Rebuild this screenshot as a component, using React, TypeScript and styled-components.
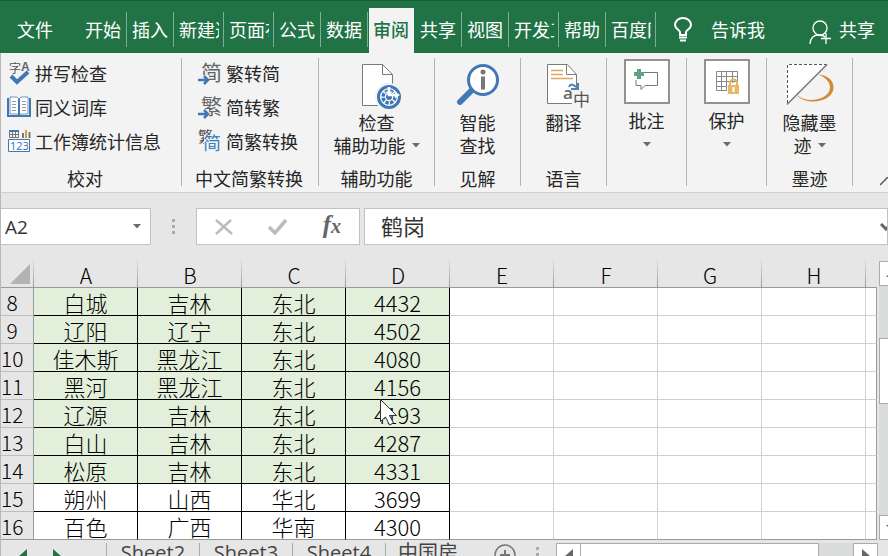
import React from 'react';
import styled, { createGlobalStyle } from 'styled-components';

const GlobalStyle = createGlobalStyle`
  * { box-sizing: border-box; }
  body {
    margin: 0;
    overflow: hidden;
    background: #e6e6e6;
    color: #262626;
    font-family: "Noto Sans CJK SC", sans-serif;
    font-size: 18px;
  }
  button, input {
    margin: 0;
    padding: 0;
    border: 0;
    background: none;
    color: inherit;
    font: inherit;
    border-radius: 0;
  }
  svg { display: block; flex: none; }
`;

const Shell = styled.div`
  position: relative;
  display: flex;
  flex-direction: column;
  height: 100vh;
  overflow: hidden;
`;

/* ---------- tab strip ---------- */
const TabStrip = styled.nav`
  display: flex;
  flex: none;
  height: 53px;
  padding-top: 7px;
  background: #217346;
  border-top: 1px solid #1a5c38;
  color: #fff;
`;

const FileTab = styled.button`
  width: 80px;
  padding: 0 10px 3px 0;
`;

const Tab = styled.button<{ $active?: boolean; $wide?: boolean }>`
  flex: none;
  width: ${p => (p.$wide ? 50 : 47)}px;
  padding: 0 5px 3px;
  line-height: 42px;
  text-align: left;
  white-space: nowrap;
  background: ${p => (p.$active
    ? 'linear-gradient(#f3f3f3, #f3f3f3) 1px 0 / 45px 100% no-repeat'
    : 'linear-gradient(#7fae94, #7fae94) right 4px / 1px 35px no-repeat')};
  color: ${p => (p.$active ? '#217346' : '#fff')};
  font-weight: ${p => (p.$active ? 500 : 400)};
`;

const Clip = styled.span`
  display: block;
  overflow: hidden;
`;

const TellMe = styled.button`
  display: flex;
  align-items: center;
  gap: 19px;
  margin-left: 18px;
  padding-bottom: 3px;
`;

const Share = styled.button`
  display: flex;
  align-items: center;
  gap: 7px;
  margin-left: auto;
  margin-right: 13px;
  padding-bottom: 3px;
`;

/* ---------- ribbon ---------- */
const Ribbon = styled.section`
  display: flex;
  flex: none;
  height: 140px;
  padding: 5px 0 6px;
  background: #f3f3f3;
  border-left: 1px solid #b8b8b8;
  border-bottom: 1px solid #cfcfcf;
`;

const Group = styled.div<{ $w: number; $pad?: number }>`
  display: flex;
  flex: none;
  flex-direction: column;
  align-items: ${p => (p.$pad ? 'stretch' : 'center')};
  width: ${p => p.$w}px;
  padding-left: ${p => p.$pad || 0}px;
  border-right: 1px solid #b3b3b3;
`;

const GroupName = styled.div<{ $shift?: number }>`
  margin-top: auto;
  margin-left: ${p => p.$shift || 0}px;
  line-height: 16px;
  white-space: nowrap;
`;

const Command = styled.button`
  display: flex;
  align-items: center;
  gap: 4px;
  height: 34px;
  padding-bottom: 4px;
  white-space: nowrap;
`;

const BigCommand = styled.button`
  display: flex;
  flex-direction: column;
  align-items: center;
  line-height: 23px;
`;

const BigIcon = styled.span`
  display: flex;
  justify-content: center;
  height: 53px;
  padding-top: 4px;
`;

const BoxIcon = styled.span`
  display: flex;
  align-items: center;
  justify-content: center;
  width: 46px;
  height: 45px;
  margin: 1px 0 5px;
  background: #fff;
  border: 2px solid #959191;
`;

const Line = styled.span`
  display: flex;
  align-items: center;
  gap: 6px;
  white-space: nowrap;
`;

const Below = styled.span`
  padding-top: 10px;
`;

const Collapse = styled.button`
  display: flex;
  flex: 1;
  align-items: flex-end;
  justify-content: flex-end;
  overflow: hidden;
`;

/* ---------- formula bar ---------- */
const FormulaBar = styled.section`
  display: flex;
  flex: none;
  height: 64px;
  padding: 15px 0 12px;
  border-left: 1px solid #b8b8b8;
`;

const Field = styled.div<{ $w?: number }>`
  display: flex;
  align-items: center;
  flex: ${p => (p.$w ? 'none' : '1')};
  width: ${p => (p.$w ? `${p.$w}px` : 'auto')};
  background: #fff;
  border: 1px solid #c2c2c2;
`;

const NameField = styled(Field)`
  border-left: 0;
  padding: 0 9px 0 4px;
`;

const NameInput = styled.input`
  flex: 1;
  min-width: 0;
  color: #333;
  font: 19px "Open Sans", sans-serif;
`;

const FormulaInput = styled.input`
  flex: 1;
  min-width: 0;
  height: 35px;
  padding: 0 0 4px 16px;
  color: #333;
  font-size: 22px;
`;

const Grip = styled.span`
  display: flex;
  align-items: center;
  justify-content: center;
  width: 45px;
`;

const Tools = styled(Field)`
  justify-content: space-between;
  margin-right: 4px;
  padding: 0 18px;
`;

const Fx = styled.button`
  padding-bottom: 2px;
  color: #666;
  font: italic bold 25px/30px "Liberation Serif", serif;

  small { font-size: 20px; }
`;

/* ---------- sheet ---------- */
const SheetArea = styled.section`
  display: flex;
  flex: none;
  gap: 2px;
`;

const GridFrame = styled.div`
  flex: 1;
  min-width: 0;
  overflow: hidden;
  border-left: 1px solid #b8b8b8;
`;

const Grid = styled.table`
  width: 100%;
  table-layout: fixed;
  border-spacing: 0;
  color: #000;
  font-size: 22px;
  font-weight: 300;
  text-align: center;
`;

const ColHead = styled.th<{ $edge?: boolean }>`
  height: 31px;
  padding: 6px 0 0;
  border-bottom: 1px solid #999;
  background: ${p => (p.$edge
    ? 'none'
    : 'linear-gradient(#e6e6e6, #999) right bottom / 1px 30px no-repeat')};
  font-size: 21px;
  font-weight: 300;
  line-height: 24px;
`;

const Corner = styled(ColHead)`
  padding: 0 3px 3px 9px;
  vertical-align: bottom;
`;

const RowHead = styled.th`
  height: 28px;
  padding: 2px 10px 0 0;
  border-right: 1px solid #999;
  border-bottom: 1px solid #bdbdbd;
  font-size: 21px;
  font-weight: 300;
  line-height: 25px;

  tr:last-child > & { border-bottom-color: #999; }
`;

const Cell = styled.td<{ $data?: boolean; $green?: boolean; $edge?: boolean }>`
  height: 28px;
  padding: 2px 0 0;
  white-space: nowrap;
  line-height: 25px;
  background: ${p => (p.$green ? '#e2efda' : '#fff')};
  border-right: 1px solid ${p => (p.$data ? '#000' : p.$edge ? '#999' : '#d0d0d0')};
  border-bottom: 1px solid ${p => (p.$data ? '#000' : '#d0d0d0')};

  tr:last-child > & { border-bottom-color: #999; }
`;

const VScroll = styled.div`
  display: flex;
  flex-direction: column;
  align-items: flex-start;
  width: 9px;
  margin-top: 4px;
  overflow: hidden;
  background: #dadcdb;
`;

const ScrollButton = styled.button`
  display: flex;
  flex: none;
  align-items: center;
  justify-content: center;
  width: 25px;
  height: 25px;
  background: #fff;
  border: 1px solid #ababab;
`;

const VThumb = styled.div`
  flex: none;
  width: 25px;
  height: 66px;
  margin: 52px 0 auto;
  background: #fff;
  border: 1px solid #ababab;
`;

/* ---------- sheet tabs ---------- */
const Footer = styled.footer`
  display: flex;
  flex: none;
  height: 30px;
  border-left: 1px solid #b8b8b8;
  color: #444;
`;

const SheetNav = styled.div`
  display: flex;
  gap: 26px;
  width: 106px;
  padding: 6px 0 0 17px;
  border-right: 1px solid #ababab;
  margin-top: 3px;
`;

const SheetTab = styled.button<{ $last?: boolean }>`
  width: ${p => (p.$last ? 85 : 93)}px;
  margin-top: 3px;
  padding-bottom: 8px;
  padding-left: ${p => (p.$last ? 12 : 0)}px;
  border-right: ${p => (p.$last ? 0 : 1)}px solid #ababab;
  font: 20px/16px "Open Sans", "Noto Sans CJK SC", sans-serif;
  text-align: ${p => (p.$last ? 'left' : 'center')};
  white-space: nowrap;
`;

const AddSheet = styled.button`
  width: 60px;
  padding: 0 0 0 23px;
`;

const FootGrip = styled.span`
  flex: 1;
  padding: 7px 0 0 5px;
`;

const HScroll = styled.div`
  display: flex;
  width: 322px;
  height: 25px;
  margin: 3px 10px 0 0;
  background: #dadcdb;
`;

const HThumb = styled.div`
  flex: none;
  width: 238px;
  margin-right: auto;
  background: #fff;
  border: 1px solid #ababab;
  border-left: 0;
`;

const Pointer = styled.svg`
  position: absolute;
  left: 379px;
  top: 398px;
`;

/* ---------- icons ---------- */
const cjk = '"Noto Sans CJK SC", sans-serif';

const Caret = () => (
  <svg width="8" height="5" viewBox="0 0 8 5"><path d="M0 0h8L4 4.5z" fill="#6b6b6b" /></svg>
);

const SpellIcon = () => (
  <svg width="24" height="26" viewBox="0 0 24 26">
    <text x="2" y="13" fontSize="12" fontFamily={cjk} fill="#555">字</text>
    <text x="14" y="11" fontSize="12" fontFamily="Liberation Sans, sans-serif" fontWeight="bold" fill="#666">A</text>
    <path d="M4 16l6 6L21 12" fill="none" stroke="#3f78b5" strokeWidth="4" />
  </svg>
);

const BookIcon = () => (
  <svg width="24" height="22" viewBox="0 0 24 22">
    <path d="M1 2v18h22V2" fill="#fff" stroke="#3f78b5" strokeWidth="2" />
    <path d="M3 1h7l2 2 2-2h7v17h-7l-2 1-2-1H3z" fill="#fff" stroke="#7493b5" />
    <path d="M12 3v16" stroke="#3f78b5" strokeWidth="2" />
    <path d="M5 5.500h4M5 8.500h4M5 11.500h4M5 14.500h4M15 5.500h4M15 8.500h4M15 11.500h4M15 14.500h4" stroke="#999" />
  </svg>
);

const StatsIcon = () => (
  <svg width="24" height="24" viewBox="0 0 24 24">
    <path d="M2.500 2.500h9v6h-9zM2 5.500h10M5.500 2v7M8.500 2v7" fill="none" stroke="#777" />
    <path d="M2 2h10" stroke="#3f78b5" strokeWidth="2" />
    <path d="M16 9V4" stroke="#777" strokeWidth="2" />
    <path d="M19 9V1" stroke="#e0993f" strokeWidth="2" />
    <path d="M22.500 9V3" stroke="#777" strokeWidth="2" />
    <path d="M1.500 10.500h21v12h-21z" fill="#fff" stroke="#3f78b5" />
    <text x="3" y="21" fontSize="11" fontFamily="Open Sans, sans-serif" fill="#3470aa">123</text>
  </svg>
);

const ConvertIcon = ({ char, both }: { char: string; both?: boolean }) => (
  <svg width="24" height="26" viewBox="0 0 24 26">
    {both && <text x="0" y="14" fontSize="15" fontFamily={cjk} fill="#555">繁</text>}
    {both && <path d="M6 7h18v19H6z" fill="#f3f3f3" />}
    <text x={both ? 5 : 3} y={both ? 22 : 20} fontSize={both ? 18 : 21} fontFamily={cjk} fill={both ? '#3b7fc0' : '#666'}>{char}</text>
    {!both && <path d="M0 15h11v8H0z" fill="#f3f3f3" />}
    {!both && <path d="M0 20h9M6 16l4 4-4 4" fill="none" stroke="#3f78b5" strokeWidth="2.500" />}
  </svg>
);

const AccessIcon = () => (
  <svg width="48" height="48" viewBox="-6 0 48 48">
    <path d="M3.500 2.500h20l10 10v31h-30z" fill="#fff" stroke="#7a7a7a" />
    <path d="M23.500 2.500v10h10" fill="none" stroke="#7a7a7a" />
    <circle cx="30" cy="35" r="14" fill="#f3f3f3" />
    <circle cx="30" cy="35" r="10.500" fill="#fff" stroke="#3f78b5" strokeWidth="3" />
    <circle cx="30" cy="35" r="6" fill="none" stroke="#3f78b5" strokeWidth="3.500" strokeDasharray="3.500 1.200" />
    <circle cx="30" cy="35" r="3" fill="#3f78b5" />
    <path d="M30 25v8h8" fill="none" stroke="#fff" strokeWidth="2.500" />
    <path d="M26.500 29.500l3.500 4.500 3.500-4.500M36 29.500l5 3.500-5 3.500z" fill="#fff" />
  </svg>
);

const LookupIcon = () => (
  <svg width="44" height="46" viewBox="0 0 44 46">
    <path d="M4 40l15-15" stroke="#3f78b5" strokeWidth="6" strokeLinecap="round" />
    <circle cx="27" cy="18" r="14.500" fill="#fff" stroke="#3f78b5" strokeWidth="3" />
    <circle cx="27" cy="10" r="2.500" fill="#777" />
    <path d="M27 14.500v13" stroke="#777" strokeWidth="4" />
  </svg>
);

const TranslateIcon = () => (
  <svg width="52" height="48" viewBox="-4 0 52 48">
    <path d="M5.500 2.500h20l9 10v29h-29z" fill="#fff" stroke="#7a7a7a" />
    <path d="M24.500 2.500v10h10" fill="none" stroke="#7a7a7a" />
    <path d="M9 8.500h12M9 12.500h12M9 16.500h22" stroke="#e0a366" strokeWidth="1.500" />
    <path d="M30 26h18v20H30z" fill="#f3f3f3" />
    <path d="M27 25q2-5 7 0M36 21v6h-7" fill="none" stroke="#4b83b8" strokeWidth="2" />
    <text x="21" y="37" fontSize="17" fontFamily="Open Sans, sans-serif" fontWeight="600" fill="#666">a</text>
    <text x="31" y="44" fontSize="17" fontFamily={cjk} fill="#555">中</text>
  </svg>
);

const CommentIcon = () => (
  <svg width="26" height="26" viewBox="1 1 26 26">
    <path d="M10 4.500h14.500v13H12l-4 4v-4H3V12" fill="none" stroke="#777" />
    <path d="M6 1v10M1 6h10" stroke="#5fa383" strokeWidth="4" />
  </svg>
);

const ProtectIcon = () => (
  <svg width="26" height="26" viewBox="0 0 26 26">
    <path d="M2.500 2.500h21v19h-21zM2 7.500h22M2 12.500h22M2 17.500h12M7.500 2v20M12.500 2v20M18.500 2v12" fill="none" stroke="#888" />
    <path d="M13 14h12v12H13z" fill="#fff" />
    <path d="M16 17v-3a3.500 3.500 0 0 1 7 0v3" fill="none" stroke="#e5b566" strokeWidth="2" />
    <path d="M14 16h11v9H14z" fill="#e8b964" />
    <path d="M19.500 18v5" stroke="#fff" strokeWidth="2" />
  </svg>
);

const InkIcon = () => (
  <svg width="52" height="46" viewBox="0 0 52 46">
    <path d="M3 2h40L3 41z" fill="#fff" />
    <path d="M34 12.500C44 13 50 19 49.500 26 49 35 38 40 28 39.500 20 39 15 36 12 32.500c5 4 10 5.500 15 5.500 10 0 19-5 19-12.500 0-6-5-10.500-12-13z" fill="#d18a35" />
    <path d="M3.500 41V2.500H43" fill="none" stroke="#555" strokeDasharray="3 2" />
    <path d="M3 42.500L43 2.500" stroke="#777" strokeWidth="1.500" />
  </svg>
);

const BulbIcon = () => (
  <svg width="18" height="28" viewBox="0 -2 18 28" fill="none" stroke="#fff" strokeWidth="2">
    <path d="M6 18v-3c0-2-5-3-5-7a8 7 0 0 1 16 0c0 4-5 5-5 7v3z" />
    <path d="M5 20.500h8M6 23.500h6" />
  </svg>
);

const PersonIcon = () => (
  <svg width="23" height="32" viewBox="0 -6 23 32" fill="none" stroke="#fff" strokeWidth="1.300">
    <circle cx="11" cy="9" r="7" />
    <path d="M1 25c0-6 4-9 8-9 3 0 5 0 7 2M17 14v11M12 19.500h10" />
  </svg>
);

/* ---------- data ---------- */
const tabs: { name: string; wide?: boolean; active?: boolean }[] = [
  { name: '开始' }, { name: '插入' }, { name: '新建选', wide: true },
  { name: '页面布', wide: true }, { name: '公式' }, { name: '数据' },
  { name: '审阅', active: true }, { name: '共享' }, { name: '视图' },
  { name: '开发工', wide: true }, { name: '帮助' }, { name: '百度网', wide: true },
];

const rows: [number, string, string, string, number][] = [
  [8, '白城', '吉林', '东北', 4432],
  [9, '辽阳', '辽宁', '东北', 4502],
  [10, '佳木斯', '黑龙江', '东北', 4080],
  [11, '黑河', '黑龙江', '东北', 4156],
  [12, '辽源', '吉林', '东北', 4193],
  [13, '白山', '吉林', '东北', 4287],
  [14, '松原', '吉林', '东北', 4331],
  [15, '朔州', '山西', '华北', 3699],
  [16, '百色', '广西', '华南', 4300],
];

const letters = ['A', 'B', 'C', 'D', 'E', 'F', 'G', 'H'];

export default function App() {
  return (
    <Shell>
      <GlobalStyle />
      <TabStrip>
        <FileTab>文件</FileTab>
        {tabs.map(t => (
          <Tab key={t.name} $wide={t.wide} $active={t.active}><Clip>{t.name}</Clip></Tab>
        ))}
        <TellMe><BulbIcon />告诉我</TellMe>
        <Share><PersonIcon />共享</Share>
      </TabStrip>

      <Ribbon>
        <Group $w={181} $pad={6}>
          <Command><SpellIcon />拼写检查</Command>
          <Command><BookIcon />同义词库</Command>
          <Command><StatsIcon />工作簿统计信息</Command>
          <GroupName $shift={60}>校对</GroupName>
        </Group>
        <Group $w={137} $pad={16}>
          <Command><ConvertIcon char="简" />繁转简</Command>
          <Command><ConvertIcon char="繁" />简转繁</Command>
          <Command><ConvertIcon char="简" both />简繁转换</Command>
          <GroupName $shift={-3}>中文简繁转换</GroupName>
        </Group>
        <Group $w={116}>
          <BigCommand>
            <BigIcon><AccessIcon /></BigIcon>
            <Line>检查</Line>
            <Line>辅助功能<Caret /></Line>
          </BigCommand>
          <GroupName>辅助功能</GroupName>
        </Group>
        <Group $w={86}>
          <BigCommand>
            <BigIcon><LookupIcon /></BigIcon>
            <Line>智能</Line>
            <Line>查找</Line>
          </BigCommand>
          <GroupName>见解</GroupName>
        </Group>
        <Group $w={86}>
          <BigCommand>
            <BigIcon><TranslateIcon /></BigIcon>
            <Line>翻译</Line>
          </BigCommand>
          <GroupName>语言</GroupName>
        </Group>
        <Group $w={80}>
          <BigCommand>
            <BoxIcon><CommentIcon /></BoxIcon>
            <Line>批注</Line>
            <Below><Caret /></Below>
          </BigCommand>
        </Group>
        <Group $w={80}>
          <BigCommand>
            <BoxIcon><ProtectIcon /></BoxIcon>
            <Line>保护</Line>
            <Below><Caret /></Below>
          </BigCommand>
        </Group>
        <Group $w={86}>
          <BigCommand>
            <BigIcon><InkIcon /></BigIcon>
            <Line>隐藏墨</Line>
            <Line>迹<Caret /></Line>
          </BigCommand>
          <GroupName>墨迹</GroupName>
        </Group>
        <Collapse aria-label="折叠功能区">
          <svg width="8" height="9" viewBox="0 0 8 9"><path d="M0 8l8-8" stroke="#555" strokeWidth="1.500" /></svg>
        </Collapse>
      </Ribbon>

      <FormulaBar>
        <NameField $w={150}>
          <NameInput aria-label="名称框" defaultValue="A2" />
          <Caret />
        </NameField>
        <Grip>
          <svg width="4" height="16" viewBox="0 0 4 16"><path d="M0 0h3v3H0zM0 6h3v3H0zM0 12h3v3H0z" fill="#aaa" /></svg>
        </Grip>
        <Tools $w={164}>
          <button aria-label="取消">
            <svg width="18" height="18" viewBox="0 0 18 18"><path d="M1 2l16 14M16 2L1 16" stroke="#bcbcbc" strokeWidth="2.500" /></svg>
          </button>
          <button aria-label="输入">
            <svg width="20" height="18" viewBox="0 0 20 18"><path d="M1 9l6 6L18 2" fill="none" stroke="#bcbcbc" strokeWidth="3.500" /></svg>
          </button>
          <Fx aria-label="插入函数">f<small>x</small></Fx>
        </Tools>
        <Field>
          <FormulaInput aria-label="编辑栏" defaultValue="鹤岗" />
          <svg width="7" height="8" viewBox="0 0 7 8"><path d="M1 1l5 5 5-5" fill="none" stroke="#666" strokeWidth="3" /></svg>
        </Field>
      </FormulaBar>

      <SheetArea>
        <GridFrame>
          <Grid>
            <colgroup>
              <col width="33" />
              {letters.map(l => <col key={l} width="104" />)}
              <col />
            </colgroup>
            <thead>
              <tr>
                <Corner aria-label="全选">
                  <svg width="20" height="20" viewBox="0 0 20 20"><path d="M20 0v20H0z" fill="#b3b3b3" /></svg>
                </Corner>
                {letters.map(l => <ColHead key={l}>{l}</ColHead>)}
                <ColHead $edge />
              </tr>
            </thead>
            <tbody>
              {rows.map(([n, ...values]) => (
                <tr key={n}>
                  <RowHead>{n}</RowHead>
                  {values.map((v, i) => <Cell key={i} $data $green={n < 15}>{v}</Cell>)}
                  <Cell /><Cell /><Cell /><Cell /><Cell $edge />
                </tr>
              ))}
            </tbody>
          </Grid>
        </GridFrame>
        <VScroll>
          <ScrollButton aria-label="向上">
            <svg width="12" height="6" viewBox="0 0 12 6"><path d="M0 6l6-6 6 6z" fill="#666" /></svg>
          </ScrollButton>
          <VThumb />
          <ScrollButton aria-label="向下">
            <svg width="12" height="6" viewBox="0 0 12 6"><path d="M0 0l6 6 6-6z" fill="#666" /></svg>
          </ScrollButton>
        </VScroll>
      </SheetArea>

      <Footer>
        <SheetNav>
          <svg width="9" height="16" viewBox="0 0 9 16"><path d="M9 0v16L0 8z" fill="#217346" /></svg>
          <svg width="9" height="16" viewBox="0 0 9 16"><path d="M0 0v16l9-8z" fill="#217346" /></svg>
        </SheetNav>
        <SheetTab>Sheet2</SheetTab>
        <SheetTab>Sheet3</SheetTab>
        <SheetTab>Sheet4</SheetTab>
        <SheetTab $last>中国房</SheetTab>
        <AddSheet aria-label="新工作表">
          <svg width="22" height="22" viewBox="0 0 22 22" fill="none" stroke="#777">
            <circle cx="11" cy="11" r="10" strokeWidth="1.500" />
            <path d="M11 6v10M6 11h10" strokeWidth="2" />
          </svg>
        </AddSheet>
        <FootGrip>
          <svg width="3" height="15" viewBox="0 0 3 15"><path d="M0 0h3v3H0zM0 6h3v3H0zM0 12h3v3H0z" fill="#aaa" /></svg>
        </FootGrip>
        <HScroll>
          <ScrollButton aria-label="向左">
            <svg width="8" height="14" viewBox="0 0 8 14"><path d="M8 0v14L0 7z" fill="#666" /></svg>
          </ScrollButton>
          <HThumb />
          <ScrollButton aria-label="向右">
            <svg width="8" height="14" viewBox="0 0 8 14"><path d="M0 0v14l8-7z" fill="#666" /></svg>
          </ScrollButton>
        </HScroll>
      </Footer>

      <Pointer width="20" height="30" viewBox="0 0 20 30">
        <path d="M1.500 1.500v22l5-4.500 4 8 4-2-4-7.500h7z" fill="#fff" stroke="#333" />
      </Pointer>
    </Shell>
  );
}
